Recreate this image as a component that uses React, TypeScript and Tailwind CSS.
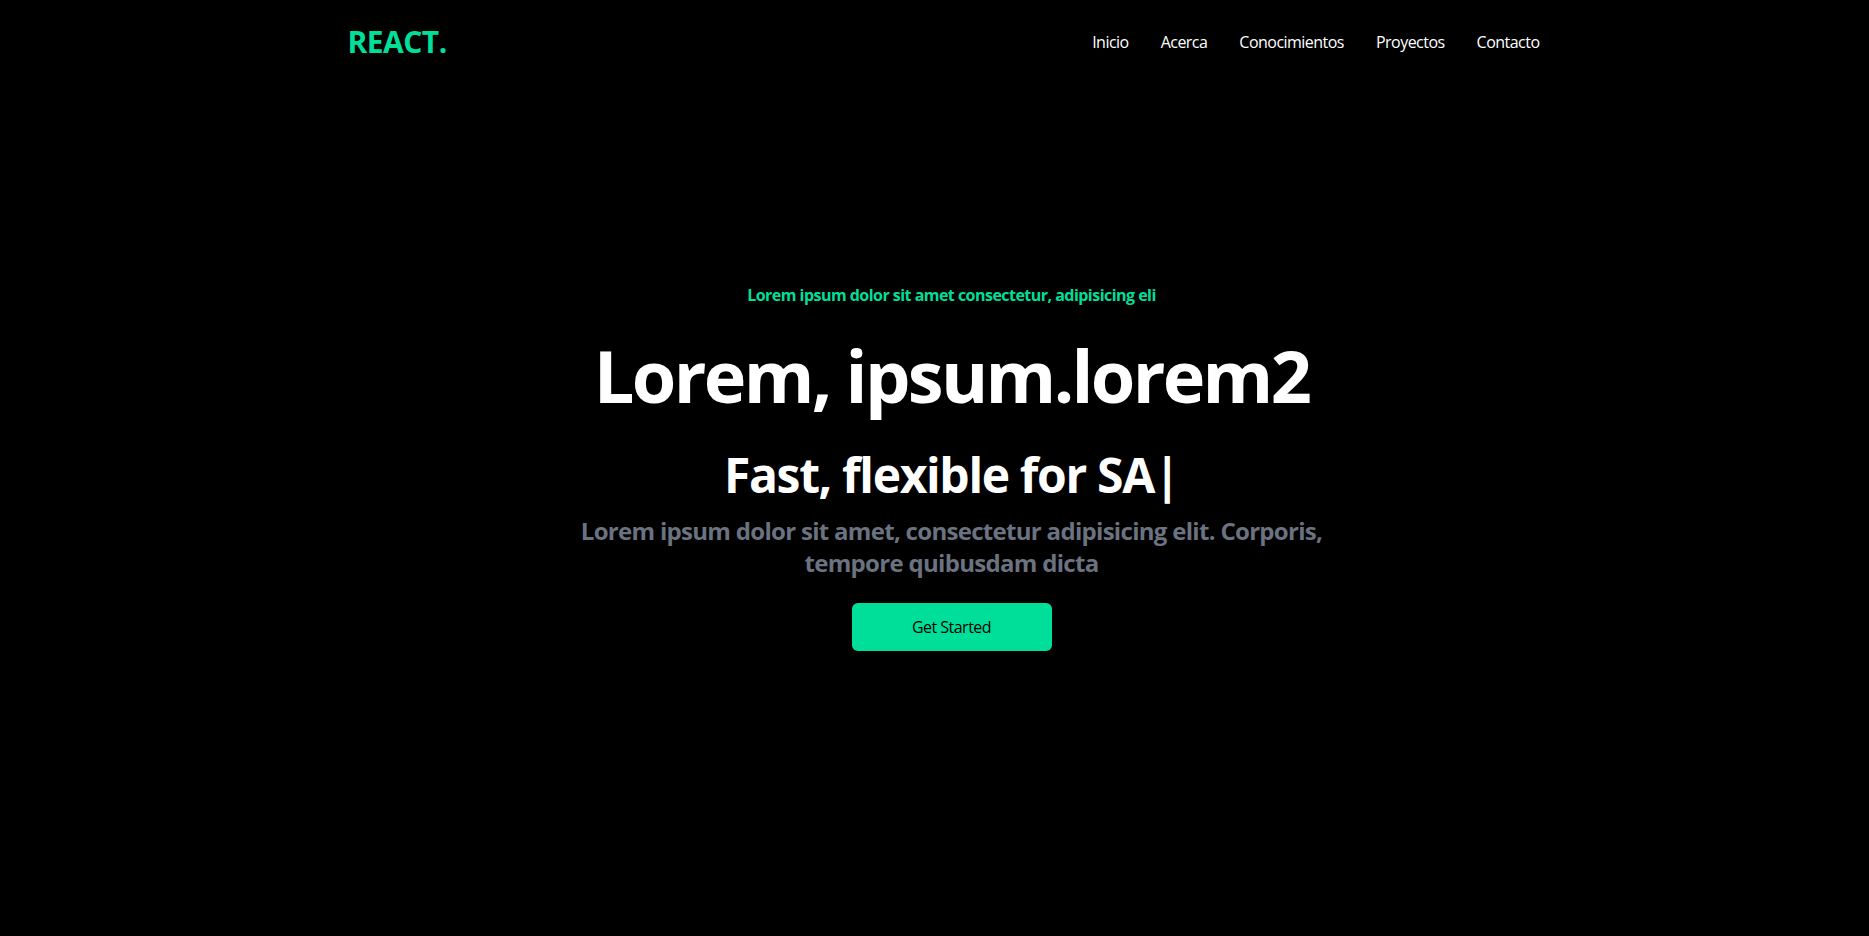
import React from "react";

const links = ["Inicio", "Acerca", "Conocimientos", "Proyectos", "Contacto"];

function Navbar() {
  return (
    <div className="flex justify-between items-center h-[84px] max-w-[1240px] mx-auto px-4 text-white">
      <h1 className="w-full text-3xl font-bold text-[#00df9a]">REACT.</h1>
      <ul className="flex">
        {links.map((l) => (
          <li key={l} className="p-4 whitespace-nowrap">
            {l}
          </li>
        ))}
      </ul>
    </div>
  );
}

function Hero() {
  return (
    <div className="text-white">
      <div className="max-w-[800px] mt-[-84px] pt-[14px] w-full h-screen mx-auto text-center flex flex-col justify-center">
        <p className="text-[#00df9a] font-bold p-2">Lorem ipsum dolor sit amet consectetur, adipisicing eli</p>
        <h1 className="text-7xl font-bold py-6 tracking-[-0.037em]">Lorem, ipsum.lorem2</h1>
        <div className="flex justify-center items-center">
          <p className="text-5xl font-bold py-4 tracking-[-0.028em]">
            Fast, flexible for <span>SA</span>
            <span>|</span>
          </p>
        </div>
        <p className="text-2xl font-bold text-[#6b7280] tracking-[-0.029em]">
          Lorem ipsum dolor sit amet, consectetur adipisicing elit. Corporis, tempore quibusdam dicta
        </p>
        <button className="bg-[#00df9a] w-[200px] rounded-md font-medium my-6 mx-auto py-3 text-black">
          Get Started
        </button>
      </div>
    </div>
  );
}

export default function App() {
  return (
    <div className="bg-black h-screen overflow-hidden pl-[34px] tracking-[-0.033em] font-['Open_Sans',sans-serif]">
      <Navbar />
      <Hero />
    </div>
  );
}
